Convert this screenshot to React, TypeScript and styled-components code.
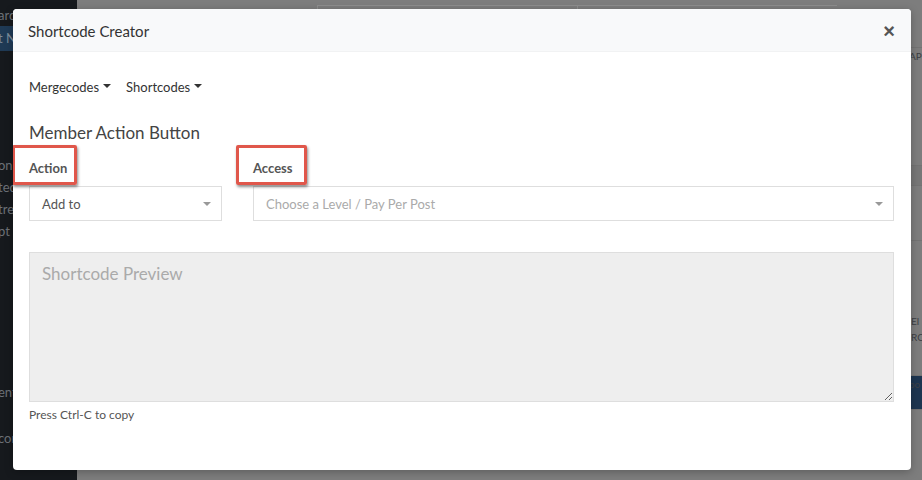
import React from "react";
import styled, { createGlobalStyle } from "styled-components";

const GlobalStyle = createGlobalStyle`
  html, body {
    margin: 0;
    padding: 0;
    height: 100%;
  }
  body {
    font-family: Lato, "Open Sans", "Liberation Sans", sans-serif;
    background: #7c7c7c;
    overflow: hidden;
  }
  * {
    box-sizing: border-box;
  }
`;

const Page = styled.div`
  position: relative;
  width: 922px;
  height: 480px;
  display: flex;
  overflow: hidden;
`;

const Sidebar = styled.div`
  width: 77px;
  flex-shrink: 0;
  background: #16191d;
  display: flex;
  flex-direction: column;
  padding-top: 4px;
  color: #6d7177;
  font-size: 13px;
`;

const SideItem = styled.div<{ $active?: boolean; $gap?: number }>`
  height: ${(p) => (p.$active ? 25 : 22)}px;
  line-height: ${(p) => (p.$active ? 25 : 22)}px;
  margin-top: ${(p) => p.$gap ?? 0}px;
  text-indent: -2px;
  background: ${(p) => (p.$active ? "#1f3a55" : "transparent")};
  color: ${(p) => (p.$active ? "#7b8a99" : "#6d7177")};
  white-space: nowrap;
  overflow: hidden;
`;

const Main = styled.div`
  flex: 1;
  background: #7d7d7d;
  display: flex;
  flex-direction: column;
`;

const TopStrip = styled.div`
  height: 10px;
  display: flex;
  padding-left: 240px;
`;

const TopField = styled.div`
  width: 260px;
  margin-top: 5px;
  border-top: 1px solid #8e8e8e;
  border-left: 1px solid #8e8e8e;
`;

const RightColumn = styled.div`
  position: absolute;
  top: 0;
  right: 0;
  width: 11px;
  height: 480px;
  display: flex;
  flex-direction: column;
  color: #3c3f44;
  font-size: 10px;
`;

const RightBlock = styled.div<{ $h: number; $bg?: string }>`
  height: ${(p) => p.$h}px;
  background: ${(p) => p.$bg ?? "transparent"};
  border-bottom: 1px solid #737373;
  white-space: nowrap;
  overflow: hidden;
  text-indent: -2px;
  line-height: 16px;
`;

const Modal = styled.div`
  position: absolute;
  left: 13px;
  top: 9px;
  width: 898px;
  height: 461px;
  background: #fff;
  border-radius: 4px;
  box-shadow: 0 2px 8px rgba(0, 0, 0, 0.25);
  display: flex;
  flex-direction: column;
  overflow: hidden;
`;

const Header = styled.div`
  height: 43px;
  background: #f8f9fa;
  border-bottom: 1px solid #f1f2f3;
  display: flex;
  align-items: center;
  justify-content: space-between;
  padding: 1px 16px 0 15px;
`;

const Title = styled.h5`
  margin: 0;
  font-size: 15px;
  font-weight: 400;
  color: #333;
`;

const Close = styled.button`
  border: 0;
  background: none;
  padding: 0;
  color: #555;
  font-size: 20px;
  font-weight: 700;
  line-height: 1;
  font-family: "Liberation Sans", sans-serif;
  cursor: pointer;
`;

const Body = styled.div`
  position: relative;
  padding: 24px 17px 0 16px;
  display: flex;
  flex-direction: column;
`;

const Menus = styled.div`
  display: flex;
  gap: 15px;
  height: 22px;
  align-items: center;
`;

const Dropdown = styled.span`
  font-size: 13px;
  color: #333;
  display: inline-flex;
  align-items: center;
  gap: 4px;
  &::after {
    content: "";
    border-top: 4px solid #333;
    border-left: 4px solid transparent;
    border-right: 4px solid transparent;
    margin-top: -2px;
  }
`;

const Heading = styled.h4`
  margin: 24px 0 0;
  font-size: 17px;
  font-weight: 400;
  color: #444;
  height: 22px;
  line-height: 22px;
`;

const Fields = styled.div`
  display: grid;
  grid-template-columns: 193px 1fr;
  column-gap: 31px;
  margin-top: 12px;
`;

const Field = styled.div`
  position: relative;
  display: flex;
  flex-direction: column;
`;

const Label = styled.label`
  font-size: 13px;
  font-weight: 700;
  color: #555;
  height: 24px;
  line-height: 24px;
  margin-bottom: 6px;
`;

const Highlight = styled.div<{ $w: number }>`
  position: absolute;
  left: -17px;
  top: -11px;
  width: ${(p) => p.$w}px;
  height: 40px;
  border: 3px solid #e0574b;
  border-radius: 2px;
  box-shadow: 1px 2px 3px rgba(0, 0, 0, 0.45);
  pointer-events: none;
`;

const Select = styled.div<{ $placeholder?: boolean }>`
  height: 35px;
  border: 1px solid #dedede;
  display: flex;
  align-items: center;
  justify-content: space-between;
  padding: 0 10px 0 12px;
  font-size: 13px;
  color: ${(p) => (p.$placeholder ? "#aaa" : "#555")};
  &::after {
    content: "";
    border-top: 4px solid #999;
    border-left: 4px solid transparent;
    border-right: 4px solid transparent;
  }
`;

const Preview = styled.textarea`
  margin-top: 31px;
  height: 150px;
  width: 100%;
  resize: vertical;
  background: #eee;
  border: 1px solid #dedede;
  padding: 10px 12px;
  font-family: inherit;
  font-size: 17px;
  color: #555;
  outline: none;
  &::placeholder {
    color: #aaa;
  }
`;

const Hint = styled.div`
  margin-top: 5px;
  font-size: 12px;
  color: #555;
`;

export default function App() {
  return (
    <>
      <GlobalStyle />
      <Page>
        <Sidebar>
          <SideItem>ard</SideItem>
          <SideItem $active>t N</SideItem>
          <SideItem $gap={103}>on</SideItem>
          <SideItem>ted</SideItem>
          <SideItem>tre</SideItem>
          <SideItem>pt</SideItem>
          <SideItem $gap={139}>ent</SideItem>
          <SideItem $gap={24}>con</SideItem>
        </Sidebar>
        <Main>
          <TopStrip>
            <TopField />
            <TopField />
          </TopStrip>
        </Main>
        <RightColumn>
          <RightBlock $h={48} />
          <RightBlock $h={118}>API</RightBlock>
          <RightBlock $h={20} $bg="#777" />
          <RightBlock $h={55} />
          <RightBlock $h={135}>
            <div style={{ height: 72 }} />
            El
            <br />
            RO
          </RightBlock>
          <RightBlock $h={34} $bg="#1d3550">
            po
          </RightBlock>
        </RightColumn>
        <Modal>
          <Header>
            <Title>Shortcode Creator</Title>
            <Close aria-label="Close">×</Close>
          </Header>
          <Body>
            <Menus>
              <Dropdown>Mergecodes</Dropdown>
              <Dropdown>Shortcodes</Dropdown>
            </Menus>
            <Heading>Member Action Button</Heading>
            <Fields>
              <Field>
                <Highlight $w={65} />
                <Label>Action</Label>
                <Select>Add to</Select>
              </Field>
              <Field>
                <Highlight $w={71} />
                <Label>Access</Label>
                <Select $placeholder>Choose a Level / Pay Per Post</Select>
              </Field>
            </Fields>
            <Preview placeholder="Shortcode Preview" readOnly />
            <Hint>Press Ctrl-C to copy</Hint>
          </Body>
        </Modal>
      </Page>
    </>
  );
}
